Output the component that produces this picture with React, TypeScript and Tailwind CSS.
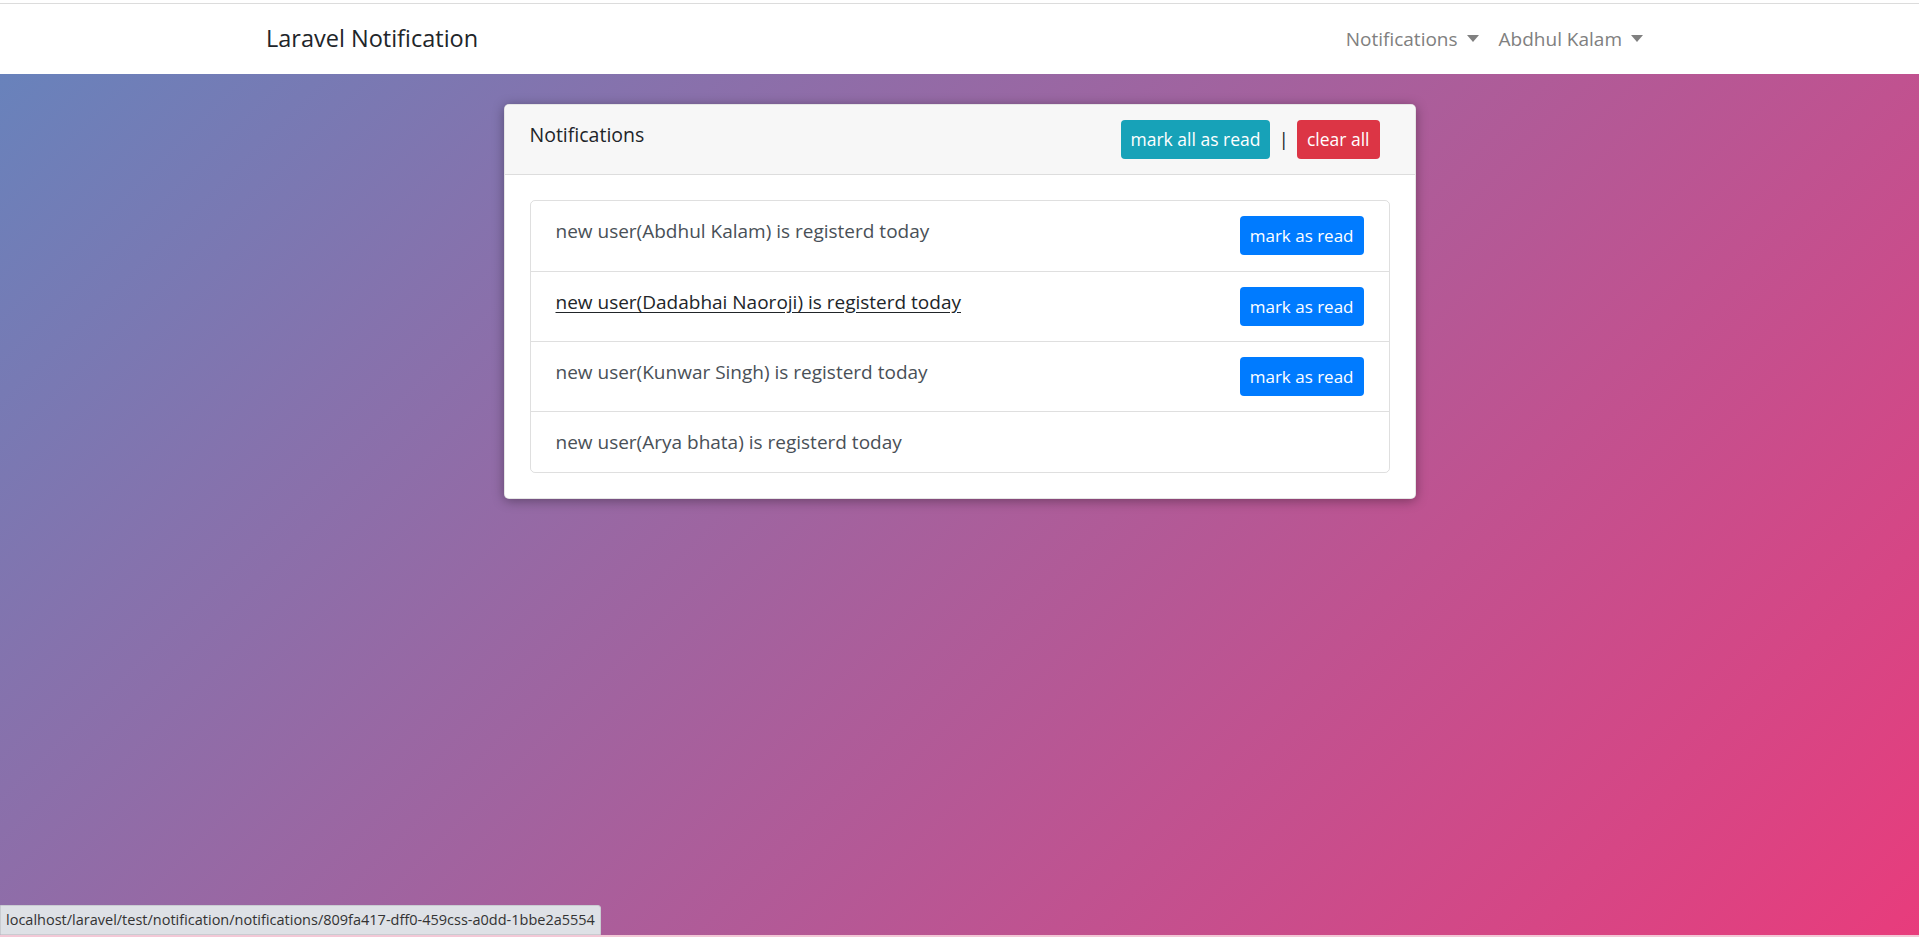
const notifications = [
  { text: "new user(Abdhul Kalam) is registerd today", unread: true },
  { text: "new user(Dadabhai Naoroji) is registerd today", unread: true, hover: true },
  { text: "new user(Kunwar Singh) is registerd today", unread: true },
  { text: "new user(Arya bhata) is registerd today", unread: false },
];

const Caret = () => (
  <span className="ml-[9px] inline-block h-0 w-0 border-x-[6px] border-t-[7px] border-x-transparent border-t-[#808080] align-[4px]" />
);

export default function App() {
  return (
    <div className="relative flex min-h-[937px] flex-col bg-[linear-gradient(135deg,#6584bd_0%,#e83c7c_100%)] font-['Open_Sans','Noto_Sans',sans-serif]">
      {/* top strip */}
      <div className="h-[3px] bg-white" />
      <div className="h-px bg-[#dcdcdc]" />

      {/* Navbar */}
      <nav className="h-[70px] bg-white">
        <div className="mx-auto flex h-full w-[1425px] items-center justify-between px-[19px]">
          <a href="#" className="text-[23.5px] text-[#212529]">
            Laravel Notification
          </a>
          <div className="flex items-center text-[19px] text-[#808080]">
            <a href="#" className="px-[10px]">
              Notifications
              <Caret />
            </a>
            <a href="#" className="px-[10px]">
              Abdhul Kalam
              <Caret />
            </a>
          </div>
        </div>
      </nav>

      {/* Card */}
      <main className="flex justify-center pt-[30px]">
        <div className="w-[912px] rounded-[5px] border border-black/10 bg-white shadow-[0_2px_12px_rgba(0,0,0,0.35)]">
          <div className="flex h-[70px] items-start justify-between rounded-t-[5px] border-b border-black/10 bg-[#f7f7f7] pl-[25px] pr-[35px] pt-[15px]">
            <span className="text-[19.5px] leading-[30px] text-[#212529]">Notifications</span>
            <div className="flex items-center">
              <button className="h-[39px] rounded-[4px] bg-[#17a2b8] px-[10px] text-[17.5px] text-white">
                mark all as read
              </button>
              <span className="mx-[8px] text-[19px] text-[#212529]">|</span>
              <button className="h-[39px] rounded-[4px] bg-[#dc3545] px-[10px] text-[17.5px] text-white">
                clear all
              </button>
            </div>
          </div>

          <div className="p-[25px]">
            <ul className="rounded-[5px] border border-black/[0.125]">
              {notifications.map((n, i) => (
                <li
                  key={n.text}
                  className={`flex items-start justify-between px-[25px] py-[15px] ${
                    i > 0 ? "border-t border-black/[0.125]" : ""
                  } ${n.unread ? "h-[70px]" : "h-[61px]"}`}
                >
                  <span
                    className={`text-[19px] leading-[30px] ${
                      n.hover ? "text-[#212529] underline underline-offset-[3px]" : "text-[#495057]"
                    }`}
                  >
                    {n.text}
                  </span>
                  {n.unread && (
                    <button className="h-[39px] rounded-[4px] bg-[#007bff] px-[10px] text-[17px] text-white">
                      mark as read
                    </button>
                  )}
                </li>
              ))}
            </ul>
          </div>
        </div>
      </main>

      {/* Browser status bubble */}
      <div className="absolute bottom-[2px] left-0 rounded-tr-[3px] border border-[#c9ccd1] bg-[#dee1e6] px-[5px] py-[4px] text-[14.5px] leading-[20px] text-[#333]">
        localhost/laravel/test/notification/notifications/809fa417-dff0-459css-a0dd-1bbe2a5554
      </div>
      <div className="absolute bottom-0 left-0 h-[2px] w-full bg-[#f3c8d6]" />
    </div>
  );
}
